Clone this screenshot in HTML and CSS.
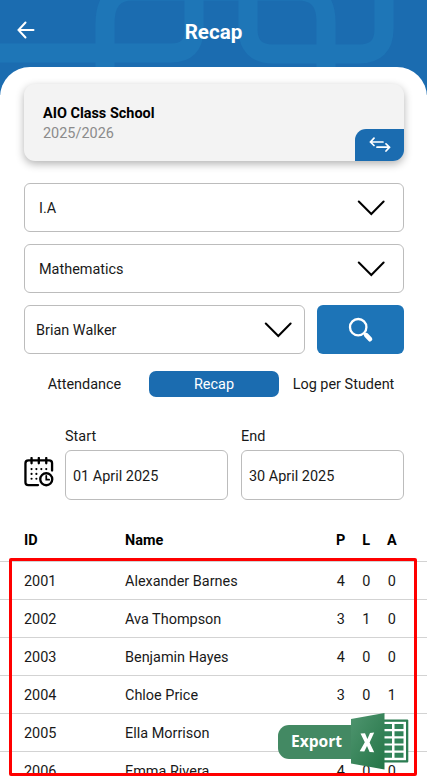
FILE: index.html
```html
<!DOCTYPE html>
<html lang="en">
<head>
    <meta charset="UTF-8">
    <meta name="viewport" content="width=device-width, initial-scale=1.0">
    <title>Recap</title>
    <link rel="stylesheet" href="styles.css">
</head>
<body>
    <div class="screen">
        <header class="header">
            <svg class="header-pattern" width="427" height="95" viewBox="0 0 427 95">
                <path d="M0 53H171Q194 53 194 30V0"/>
                <path d="M105 95V24Q105 -9 132 -9H298Q326 -9 326 22V95"/>
                <path d="M248 0V29Q248 54 273 54H359Q384 54 384 29V0"/>
            </svg>
            <svg class="back" width="18" height="18" viewBox="0 0 18 18">
                <path d="M16.5 9H1.5M8.5 1.5L1.5 9L8.5 16.5"/>
            </svg>
            <h1>Recap</h1>
        </header>

        <main class="content">
            <div class="school-card">
                <div class="school-name">AIO Class School</div>
                <div class="school-year">2025/2026</div>
                <div class="switch">
                    <svg width="22" height="16" viewBox="0 0 22 16">
                        <path d="M14 5H1.5M5 1.2L1.5 5L5 8.5M8 10.2H20.5M17 6.8L20.5 10.2L17 14"/>
                    </svg>
                </div>
            </div>

            <div class="select">
                <span>I.A</span>
                <svg class="chevron" width="28" height="16" viewBox="0 0 28 16"><path d="M1.8 1.5L14.3 14L26.6 1.5"/></svg>
            </div>
            <div class="select">
                <span>Mathematics</span>
                <svg class="chevron" width="28" height="16" viewBox="0 0 28 16"><path d="M1.8 1.5L14.3 14L26.6 1.5"/></svg>
            </div>
            <div class="search-row">
                <div class="select teacher">
                    <span>Brian Walker</span>
                    <svg class="chevron" width="28" height="16" viewBox="0 0 28 16"><path d="M1.8 1.5L14.3 14L26.6 1.5"/></svg>
                </div>
                <div class="search-btn">
                    <svg width="26" height="26" viewBox="0 0 26 26" fill="none" stroke="#fff">
                        <circle cx="10.2" cy="10.2" r="8.2" stroke-width="2.3"/>
                        <path d="M15.8 15.8L18 18" stroke-width="2.4"/>
                        <path d="M18.2 18.2L22 22.2" stroke-width="4.6" stroke-linecap="round"/>
                    </svg>
                </div>
            </div>

            <nav class="tabs">
                <div class="tab">Attendance</div>
                <div class="tab active">Recap</div>
                <div class="tab">Log per Student</div>
            </nav>

            <div class="dates">
                <svg class="calendar" width="30" height="30" viewBox="0 0 31 31">
                    <path class="line" d="M14.5 29H4.5Q1.5 29 1.5 26V6.5Q1.5 3.5 4.5 3.5H26Q29 3.5 29 6.5V14M7.8 1V6.5M15.3 1V6.5M23 1V6.5"/>
                    <path class="dots" d="M7.8 12.5h.01M12.8 12.5h.01M17.9 12.5h.01M23 12.5h.01M7.8 17.5h.01M12.8 17.5h.01M7.8 22.5h.01M12.8 22.5h.01"/>
                    <circle class="line" cx="23" cy="23" r="6.2"/>
                    <path class="line hand" d="M23 19.5V23.4H26"/>
                </svg>
                <div class="date-group">
                    <label>Start</label>
                    <div class="date">01 April 2025</div>
                </div>
                <div class="date-group">
                    <label>End</label>
                    <div class="date">30 April 2025</div>
                </div>
            </div>
        </main>

        <section class="students">
            <div class="row head"><span>ID</span><span>Name</span><span>P</span><span>L</span><span>A</span></div>
            <div class="row"><span>2001</span><span>Alexander Barnes</span><span>4</span><span>0</span><span>0</span></div>
            <div class="row"><span>2002</span><span>Ava Thompson</span><span>3</span><span>1</span><span>0</span></div>
            <div class="row"><span>2003</span><span>Benjamin Hayes</span><span>4</span><span>0</span><span>0</span></div>
            <div class="row"><span>2004</span><span>Chloe Price</span><span>3</span><span>0</span><span>1</span></div>
            <div class="row"><span>2005</span><span>Ella Morrison</span><span></span><span></span><span></span></div>
            <div class="row"><span>2006</span><span>Emma Rivera</span><span>4</span><span>0</span><span>0</span></div>
        </section>

        <!-- floating export button -->
        <div class="export">
            <span class="export-label">Export</span>
            <svg class="excel" width="58" height="58" viewBox="0 0 58 58">
                <defs>
                    <linearGradient id="cover" x1="0" y1="0" x2="1" y2="1">
                        <stop offset="0" stop-color="#4f956f"/>
                        <stop offset="1" stop-color="#247547"/>
                    </linearGradient>
                </defs>
                <rect x="30" y="6.5" width="27.3" height="43" rx="1" fill="#2c7d52"/>
                <rect x="30" y="8.8" width="25" height="38.4" fill="#fff"/>
                <path fill="#318359" d="M33 11h8v5h-8zM43.5 11h9v5h-9zM33 18.2h8v5h-8zM43.5 18.2h9v5h-9zM33 25.4h8v5h-8zM43.5 25.4h9v5h-9zM33 32.6h8v5h-8zM43.5 32.6h9v5h-9zM33 39.8h8v5h-8zM43.5 39.8h9v5h-9z"/>
                <path fill="url(#cover)" d="M0 6L33.5 0V56.5L0 50.5Z"/>
                <path fill="#fff" d="M9.5 20.5L14 20.2L16.4 26L19 19.9L23.2 19.6L18.6 29.4L23.2 39.2L18.6 38.9L16 33L13.3 38.6L8.7 38.3L13.8 29.3Z"/>
            </svg>
        </div>
        <div class="highlight"></div>
    </div>
</body>
</html>
```

FILE: styles.css
```css
* {
    margin: 0;
    padding: 0;
    box-sizing: border-box;
}

body {
    background: #fff;
    color: #191919;
    font-family: Roboto, "Liberation Sans", sans-serif;
    font-size: 14.45px;
    line-height: 20px;
    overflow: hidden;
}

.screen {
    position: relative;
    width: 427px;
    height: 784px;
    overflow: hidden;
}

.header {
    position: relative;
    height: 95px;
    background: #1b6cb0;
    color: #fff;
    text-align: center;
}

.header-pattern {
    position: absolute;
    top: 0;
    left: 0;
    fill: none;
    stroke: #1e76b7;
    stroke-width: 19px;
}

.back {
    position: absolute;
    top: 21px;
    left: 17px;
    fill: none;
    stroke: #fff;
    stroke-width: 2px;
    stroke-linecap: round;
}

.header h1 {
    position: relative;
    padding-top: 20px;
    font-size: 20.6px;
    line-height: 24px;
    font-weight: 700;
}

.content {
    position: relative;
    height: 452px;
    margin-top: -28px;
    padding: 17px 23px 0 24px;
    background: #fff;
    border-radius: 30px 30px 0 0;
}

.school-card {
    position: relative;
    height: 77px;
    margin-bottom: 22px;
    padding: 20px 19px;
    background: #f3f3f3;
    border-radius: 11px;
    box-shadow: 0 3px 8px rgba(0, 0, 0, 0.3);
}

.school-name {
    color: #000;
    font-weight: 700;
}

.school-year {
    color: #8b8b8b;
}

.switch {
    position: absolute;
    right: 0;
    bottom: 0;
    width: 49px;
    height: 32px;
    padding: 8px 14px;
    background: #1b6cb0;
    border-radius: 11px 0 11px 0;
}

.switch svg {
    display: block;
    fill: none;
    stroke: #fff;
    stroke-width: 1.7px;
    stroke-linecap: round;
}

.select {
    display: flex;
    justify-content: space-between;
    align-items: center;
    height: 49px;
    margin-bottom: 12px;
    padding: 3px 18px 0 14px;
    border: 1px solid #bcbcbc;
    border-radius: 6px;
}

.chevron {
    margin-bottom: 2px;
    fill: none;
    stroke: #000;
    stroke-width: 2px;
    stroke-linecap: round;
}

.search-row {
    display: flex;
    gap: 12px;
}

.teacher {
    flex: 1;
    margin: 0;
    padding: 3px 12px 0 11px;
}

.search-btn {
    display: flex;
    justify-content: center;
    align-items: center;
    width: 87px;
    height: 49px;
    background: #1d74b7;
    border-radius: 6px;
}

.tabs {
    display: flex;
    justify-content: space-between;
    margin-top: 17px;
}

.tab {
    width: 121px;
    height: 26px;
    line-height: 28px;
    text-align: center;
}

.tab.active {
    width: 130px;
    background: #1b6cb0;
    color: #fff;
    border-radius: 7px;
}

.dates {
    display: flex;
    margin-top: 30px;
}

.calendar {
    margin: 30px 11px 0 0;
    fill: none;
    stroke: #000;
    stroke-linecap: round;
}

.calendar .line {
    stroke-width: 2.4px;
}

.calendar .hand {
    stroke-width: 1.8px;
}

.calendar .dots {
    stroke-width: 2.2px;
}

.date-group {
    width: 163px;
    margin-right: 13px;
}

.date-group:last-child {
    margin-right: 0;
}

.date-group label {
    display: block;
    height: 23px;
}

.date {
    height: 50px;
    padding: 16px 7px 0;
    border: 1px solid #bcbcbc;
    border-radius: 6px;
}

.students {
    height: 254px;
    overflow: hidden;
}

.row {
    display: grid;
    grid-template-columns: 101px 203px 25.5px 25.5px 25.5px;
    height: 38px;
    padding: 10px 0 0 24px;
    border-top: 1px solid #d3d3d3;
}

.row span:nth-child(n+3) {
    text-align: center;
}

.row.head {
    height: 42px;
    padding-top: 12px;
    border: none;
    color: #000;
    font-weight: 700;
}

.export {
    position: absolute;
    top: 713px;
    left: 278px;
    display: flex;
    align-items: center;
}

.export-label {
    width: 73px;
    height: 34px;
    padding-left: 13px;
    background: #438963;
    border-radius: 11px 0 0 11px;
    color: #fff;
    font: 700 15.6px/33px "Open Sans", sans-serif;
}

.highlight {
    position: absolute;
    top: 558px;
    left: 9px;
    width: 408px;
    height: 218px;
    border: 3px solid #f00;
    border-radius: 2px;
}
```
